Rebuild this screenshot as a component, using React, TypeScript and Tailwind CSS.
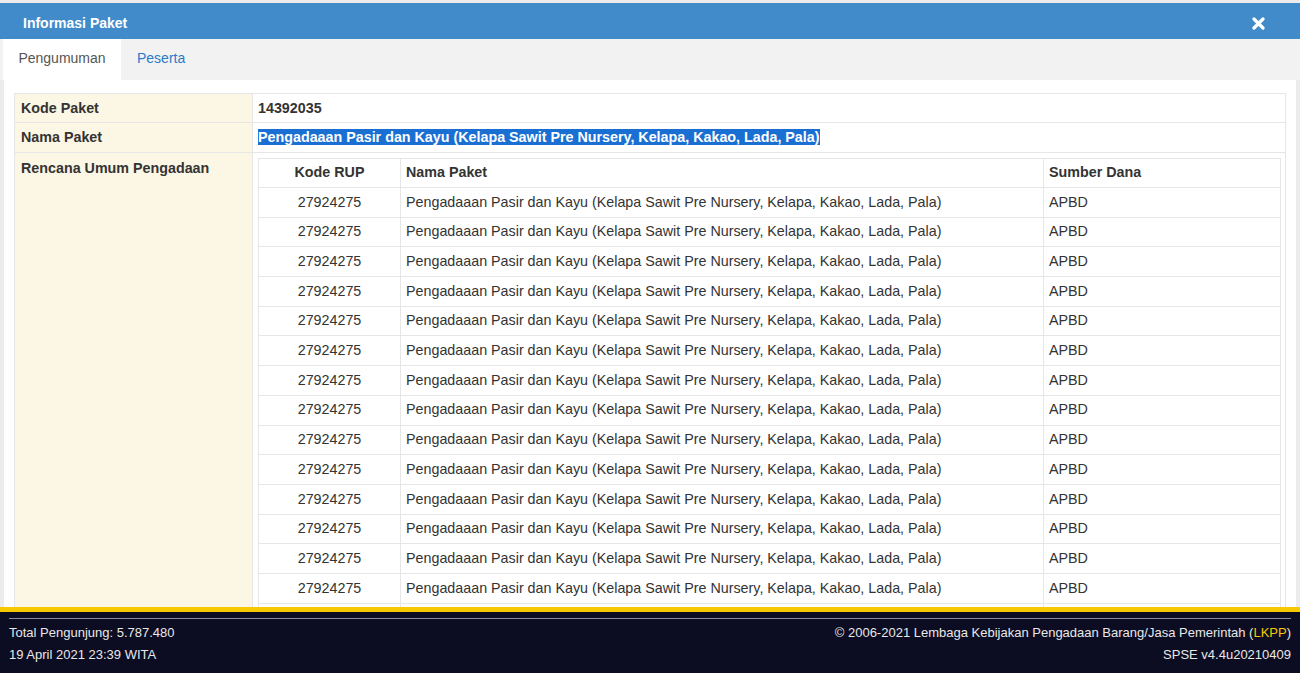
import React from 'react';

const rupRows = Array.from({ length: 16 }).map(() => ({
  kode: '27924275',
  nama: 'Pengadaaan Pasir dan Kayu (Kelapa Sawit Pre Nursery, Kelapa, Kakao, Lada, Pala)',
  sumber: 'APBD',
}));

const App: React.FC = () => {
  return (
    <div
      className="h-[673px] w-full flex flex-col overflow-hidden bg-[#ececec] text-[14.3px] text-[#333]"
      style={{ fontFamily: '"Liberation Sans", Arial, sans-serif' }}
    >
      {/* Header */}
      <div className="mt-[3px] h-[36px] shrink-0 bg-[#428bca] flex items-center justify-between pt-[4px] pl-[23px] pr-[35px]">
        <span className="text-white font-bold text-[14px]">Informasi Paket</span>
        <svg className="w-[13px] h-[13px]" viewBox="0 0 13 13">
          <path d="M2 2 L11 11 M11 2 L2 11" stroke="#fff" strokeWidth="3.2" strokeLinecap="round" />
        </svg>
      </div>

      {/* Tabs */}
      <div className="h-[41px] shrink-0 bg-[#f2f2f2] flex pl-[3px]">
        <div className="w-[118px] bg-white flex items-center justify-center pb-[3px] text-[#555] text-[14px]">Pengumuman</div>
        <div className="px-[16px] flex items-center pb-[3px] text-[#2a7bc9] text-[14px]">Peserta</div>
      </div>

      {/* Body */}
      <div className="flex-1 min-h-0 mx-[3px] bg-white border-x border-[#ececec] overflow-hidden pt-[13px] pl-[10px] pr-[10px]">
        <table className="w-full border-collapse border border-[#e6e6e6]">
          <tbody>
            <tr className="h-[29px]">
              <td className="w-[238px] bg-[#fcf6e4] border border-[#e6e6e6] px-[6px] pt-[2px] font-bold align-middle">Kode Paket</td>
              <td className="border border-[#e6e6e6] px-[5px] pt-[2px] font-bold align-middle">14392035</td>
            </tr>
            <tr className="h-[30px]">
              <td className="bg-[#fcf6e4] border border-[#e6e6e6] px-[6px] pt-[1px] font-bold align-middle">Nama Paket</td>
              <td className="border border-[#e6e6e6] px-[5px] pt-[1px] align-middle">
                <span className="bg-[#1a6fd3] text-white font-bold">
                  Pengadaaan Pasir dan Kayu (Kelapa Sawit Pre Nursery, Kelapa, Kakao, Lada, Pala)
                </span>
              </td>
            </tr>
            <tr>
              <td className="bg-[#fcf6e4] border border-[#e6e6e6] px-[6px] pt-[5px] font-bold align-top">
                Rencana Umum Pengadaan
              </td>
              <td className="border border-[#e6e6e6] pl-[5px] pr-[4px] pt-[5px] align-top">
                <table className="w-full border-collapse border border-[#e6e6e6]">
                  <thead>
                    <tr className="h-[29px]">
                      <th className="w-[142px] border border-[#e6e6e6] font-bold text-center">Kode RUP</th>
                      <th className="w-[643px] border border-[#e6e6e6] font-bold text-left px-[5px]">Nama Paket</th>
                      <th className="border border-[#e6e6e6] font-bold text-left px-[5px]">Sumber Dana</th>
                    </tr>
                  </thead>
                  <tbody>
                    {rupRows.map((row, index) => (
                      <tr key={index} className="h-[29.7px]">
                        <td className="border border-[#e6e6e6] text-center">{row.kode}</td>
                        <td className="border border-[#e6e6e6] px-[5px]">{row.nama}</td>
                        <td className="border border-[#e6e6e6] px-[5px]">{row.sumber}</td>
                      </tr>
                    ))}
                  </tbody>
                </table>
              </td>
            </tr>
          </tbody>
        </table>
      </div>

      {/* Footer */}
      <div className="h-[66px] shrink-0 border-t-[5px] border-[#f6c800] bg-[#0c0c22] text-[#e8e8e8] text-[13px]">
        <div className="mx-[9px] mt-[6px] border-t border-[#8a8a99]"></div>
        <div className="flex justify-between px-[9px] pt-[3px] leading-[22px]">
          <div>
            <div>Total Pengunjung: 5.787.480</div>
            <div>19 April 2021 23:39 WITA</div>
          </div>
          <div className="text-right">
            <div>
              © 2006-2021 Lembaga Kebijakan Pengadaan Barang/Jasa Pemerintah (<span className="text-[#f6c800]">LKPP</span>)
            </div>
            <div>SPSE v4.4u20210409</div>
          </div>
        </div>
      </div>
    </div>
  );
};

export default App;
